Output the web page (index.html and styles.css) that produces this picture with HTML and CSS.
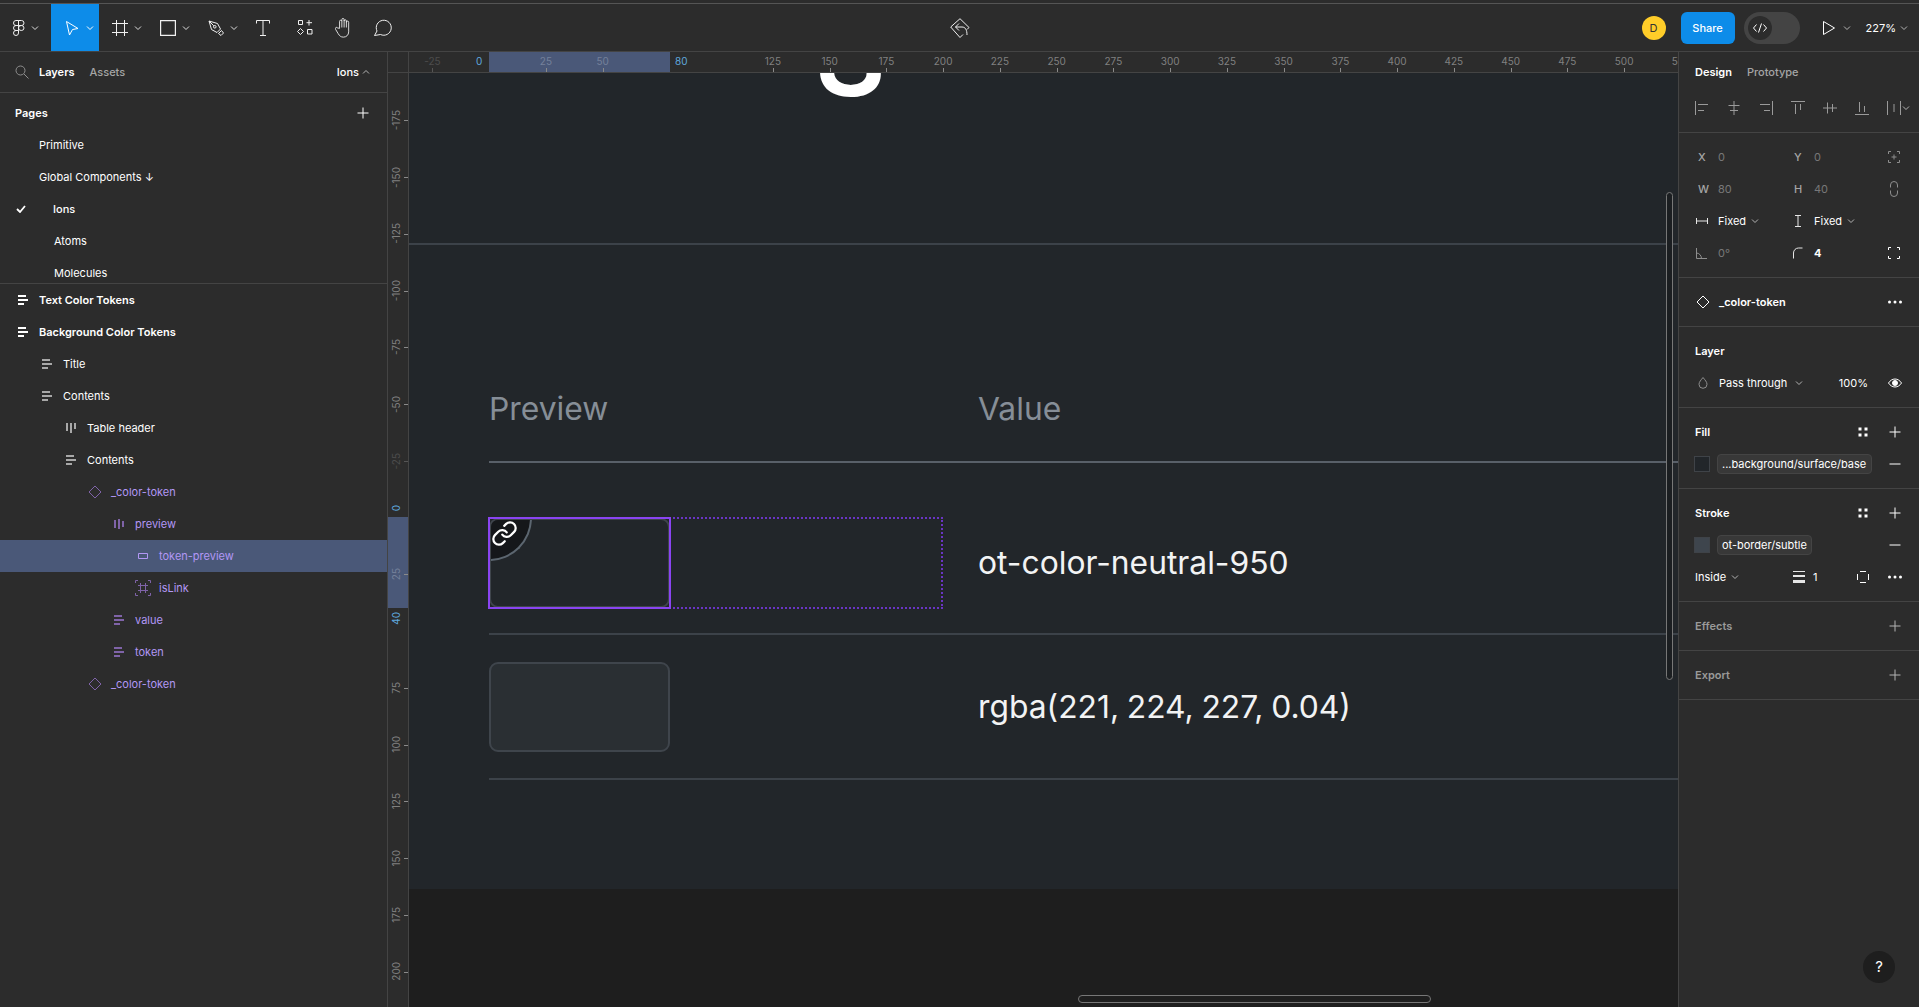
FILE: index.html
```html
<!DOCTYPE html>
<html lang="en">
<head>
  <meta charset="UTF-8">
  <title>Figma - Ions</title>
  <link rel="stylesheet" href="styles.css">
</head>
<body>

<!-- shared icons -->
<svg class="sprite" width="0" height="0">
  <symbol id="chev" viewBox="0 0 8 8"><path d="M1 2.5l3 3 3-3" fill="none" stroke="currentColor"/></symbol>
  <symbol id="plus" viewBox="0 0 16 16"><path d="M8 2.5v11M2.500 8h11" fill="none" stroke="currentColor"/></symbol>
  <symbol id="minus" viewBox="0 0 16 16"><path d="M2.500 8h11" fill="none" stroke="currentColor"/></symbol>
  <symbol id="dots4" viewBox="0 0 16 16"><path d="M3.500 3.500h3v3h-3zM9.500 3.500h3v3h-3zM3.500 9.500h3v3h-3zM9.500 9.500h3v3h-3z" fill="currentColor"/></symbol>
  <symbol id="dots3" viewBox="0 0 16 16"><circle cx="2.500" cy="8" r="1.500" fill="currentColor"/><circle cx="8" cy="8" r="1.500" fill="currentColor"/><circle cx="13.500" cy="8" r="1.500" fill="currentColor"/></symbol>
  <symbol id="stack-h" viewBox="0 0 16 16"><path d="M3 3h8v2H3zM3 7h10v2H3zM3 11h6v2H3z" fill="currentColor"/></symbol>
  <symbol id="stack-v" viewBox="0 0 16 16"><path d="M3 3h2v8H3zM7 3h2v10H7zM11 3h2v6h-2z" fill="currentColor"/></symbol>
  <symbol id="stack-c" viewBox="0 0 16 16"><path d="M3 4h2v8H3zM7 3h2v10H7zM11 5h2v6h-2z" fill="currentColor"/></symbol>
  <symbol id="diamond" viewBox="0 0 16 16"><path d="M8 2l6 6-6 6-6-6z" fill="none" stroke="currentColor"/></symbol>
</svg>

<div class="top-strip"></div>

<header class="toolbar">
  <div class="tools">
    <div class="tool tool-logo">
      <svg width="16" height="16" viewBox="0 0 16 16" fill="none" stroke="currentColor"><path d="M7.500 .5H5a2.500 2.500 0 0 0 0 5h2.500zM7.500 .5h3a2.500 2.500 0 0 1 0 5h-3zM7.500 5.500H5a2.500 2.500 0 0 0 0 5h2.500zM13 8a2.750 2.500 0 1 1-5.500 0 2.750 2.500 0 0 1 5.500 0zM7.500 10.500H5a2.500 2.500 0 1 0 2.500 2.500z"/></svg>
      <svg class="chev"><use href="#chev"/></svg>
    </div>
    <div class="tool tool-active">
      <svg width="16" height="16" viewBox="0 0 16 16" fill="none" stroke="currentColor"><path d="M2.500 1.500L14 8.500l-5.500 1-3 5.500z"/></svg>
      <svg class="chev"><use href="#chev"/></svg>
    </div>
    <div class="tool">
      <svg width="16" height="16" viewBox="0 0 16 16" fill="none" stroke="currentColor"><path d="M4.500 0v16M12.500 0v16M0 3.500h16M0 12.500h16"/></svg>
      <svg class="chev"><use href="#chev"/></svg>
    </div>
    <div class="tool">
      <svg width="16" height="16" viewBox="0 0 16 16" fill="none" stroke="currentColor" stroke-width="1.200"><path d="M.6 .6h14.800v14.800H.6z"/></svg>
      <svg class="chev"><use href="#chev"/></svg>
    </div>
    <div class="tool">
      <svg width="16" height="16" viewBox="0 0 16 16" fill="none" stroke="currentColor"><path d="M1 1l8.500 2.500 3 5.500-3.500 3.500-5.500-3zM1 1l4.800 4.800M10.500 13.500l3-3 2 2.500-2.500 2.500z"/><circle cx="6.800" cy="6.800" r="1.300"/></svg>
      <svg class="chev"><use href="#chev"/></svg>
    </div>
    <div class="tool tool-single">
      <svg width="16" height="16" viewBox="0 0 16 16" fill="none" stroke="currentColor"><path d="M1.500 3.500V.5h13v3M8 .5v15M5 15.500h6"/></svg>
    </div>
    <div class="tool tool-single tool-nudge">
      <svg width="16" height="16" viewBox="0 0 16 16" fill="none" stroke="currentColor"><path d="M1.500 .5h4v4h-4zM12 0v5.500M9.500 2.700h5.500M3.500 8.500l3 3-3 3-3-3zM10.500 9.500H15V14h-4.500z"/></svg>
    </div>
    <div class="tool tool-single">
      <svg width="17" height="21" viewBox="0 0 19 24" fill="none" stroke="currentColor"><path d="M5 13V5a1.300 1.300 0 0 1 2.600 0v-2a1.300 1.300 0 0 1 2.600 0v1.500a1.300 1.300 0 0 1 2.600 0V6a1.300 1.300 0 0 1 2.600 0v11c0 3.500-2.500 6-6 6-3 0-4.500-1.500-6-4l-3-5c-1-1.800 1.200-3 2.400-1.500zM7.600 5v7M10.200 4v8M12.800 5v7"/></svg>
    </div>
    <div class="tool tool-single">
      <svg width="18" height="17" viewBox="0 0 18 17" fill="none" stroke="currentColor"><path d="M.5 16.500L3 12a7.500 7.500 0 1 1 3.500 3.500z"/></svg>
    </div>
  </div>
  <div class="toolbar-center">
    <svg width="20" height="20" viewBox="0 0 20 20" fill="none" stroke="currentColor"><path d="M13 16.500l-3 3L.7 9 10 .7l9 8.800-2 2M9 5.500L5.500 9 9 12.500M5.500 9H12c3.500 0 5 3 5 8"/></svg>
  </div>
  <div class="toolbar-right">
    <div class="avatar">D</div>
    <div class="share-btn">Share</div>
    <div class="code-toggle">
      <span class="code-knob">
        <svg width="14" height="10" viewBox="0 0 14 10" fill="none" stroke="currentColor"><path d="M3.500 1.500L.5 5l3 3.500M10.500 1.500l3 3.500-3 3.500M8.500 .5l-3 9"/></svg>
      </span>
    </div>
    <div class="play">
      <svg width="14" height="16" viewBox="0 0 14 16" fill="none" stroke="currentColor"><path d="M1.500 1.500L12.500 8 1.500 14.500z"/></svg>
      <svg class="chev"><use href="#chev"/></svg>
    </div>
    <div class="zoom-level">227%<svg class="chev"><use href="#chev"/></svg></div>
  </div>
</header>

<div class="workspace">

  <aside class="left-panel">
    <div class="panel-tabs">
      <svg class="search-icon" width="14" height="14" viewBox="0 0 14 14" fill="none" stroke="currentColor"><circle cx="5.500" cy="5.500" r="4.500"/><path d="M9 9l4.500 4.500"/></svg>
      <span class="tab-on">Layers</span>
      <span class="tab-off">Assets</span>
      <span class="page-picker">Ions<svg class="chev chev-up"><use href="#chev"/></svg></span>
    </div>

    <div class="pages">
      <div class="pages-head">
        <span>Pages</span>
        <svg class="icon"><use href="#plus"/></svg>
      </div>
      <div class="page-row">Primitive</div>
      <div class="page-row">Global Components ↓</div>
      <div class="page-row page-current">
        <svg class="check" width="10" height="8" viewBox="0 0 10 8" fill="none" stroke="currentColor" stroke-width="1.800"><path d="M1 4l3 3 5-6"/></svg>
        Ions
      </div>
      <div class="page-row page-sub">Atoms</div>
      <div class="page-row page-sub">Molecules</div>
    </div>

    <div class="layers">
      <div class="layer depth-0 strong"><svg class="icon"><use href="#stack-h"/></svg>Text Color Tokens</div>
      <div class="layer depth-0 strong"><svg class="icon"><use href="#stack-h"/></svg>Background Color Tokens</div>
      <div class="layer depth-1"><svg class="icon dim"><use href="#stack-h"/></svg>Title</div>
      <div class="layer depth-1"><svg class="icon dim"><use href="#stack-h"/></svg>Contents</div>
      <div class="layer depth-2"><svg class="icon dim"><use href="#stack-v"/></svg>Table header</div>
      <div class="layer depth-2"><svg class="icon dim"><use href="#stack-h"/></svg>Contents</div>
      <div class="layer depth-3 purple"><svg class="icon"><use href="#diamond"/></svg>_color-token</div>
      <div class="layer depth-4 purple"><svg class="icon"><use href="#stack-c"/></svg>preview</div>
      <div class="layer depth-5 purple layer-selected">
        <svg class="icon" viewBox="0 0 16 16" fill="none" stroke="currentColor"><path d="M3.500 5.500h9v5h-9z"/></svg>token-preview
      </div>
      <div class="layer depth-5 purple">
        <svg class="icon" viewBox="0 0 16 16" fill="none" stroke="currentColor"><path d="M.5 3V.5H3M13 .5h2.500V3M15.500 13v2.500H13M3 15.500H.5V13M5.500 3v10M10.500 3v10M3 5.500h10M3 10.500h10"/></svg>isLink
      </div>
      <div class="layer depth-4 purple"><svg class="icon"><use href="#stack-h"/></svg>value</div>
      <div class="layer depth-4 purple"><svg class="icon"><use href="#stack-h"/></svg>token</div>
      <div class="layer depth-3 purple"><svg class="icon"><use href="#diamond"/></svg>_color-token</div>
    </div>
  </aside>

  <main class="stage">
    <div class="ruler-corner"></div>

    <div class="ruler-x">
      <div class="ruler-hl"></div>
      <span class="mark mark-zero">0</span>
      <span class="mark mark-end">80</span>
      <span class="cell faint">-25</span>
      <span class="cell blank"></span>
      <span class="cell on-hl">25</span>
      <span class="cell on-hl">50</span>
      <span class="cell blank"></span>
      <span class="cell blank"></span>
      <span class="cell">125</span>
      <span class="cell">150</span>
      <span class="cell">175</span>
      <span class="cell">200</span>
      <span class="cell">225</span>
      <span class="cell">250</span>
      <span class="cell">275</span>
      <span class="cell">300</span>
      <span class="cell">325</span>
      <span class="cell">350</span>
      <span class="cell">375</span>
      <span class="cell">400</span>
      <span class="cell">425</span>
      <span class="cell">450</span>
      <span class="cell">475</span>
      <span class="cell">500</span>
      <span class="cell">525</span>
    </div>

    <div class="ruler-y">
      <div class="ruler-hl"></div>
      <span class="mark mark-zero">0</span>
      <span class="mark mark-end">40</span>
      <span class="cell"><b>-175</b></span>
      <span class="cell"><b>-150</b></span>
      <span class="cell"><b>-125</b></span>
      <span class="cell"><b>-100</b></span>
      <span class="cell"><b>-75</b></span>
      <span class="cell"><b>-50</b></span>
      <span class="cell faint"><b>-25</b></span>
      <span class="cell blank"></span>
      <span class="cell on-hl"><b>25</b></span>
      <span class="cell blank"></span>
      <span class="cell"><b>75</b></span>
      <span class="cell"><b>100</b></span>
      <span class="cell"><b>125</b></span>
      <span class="cell"><b>150</b></span>
      <span class="cell"><b>175</b></span>
      <span class="cell"><b>200</b></span>
    </div>

    <div class="canvas">
      <div class="frame">
        <div class="big-letter">S</div>
        <div class="frame-title"></div>
        <div class="table">
          <div class="table-header">
            <div class="col-preview">Preview</div>
            <div>Value</div>
          </div>
          <div class="token-row token-row-first">
            <div class="preview preview-selected">
              <div class="swatch-box">
                <div class="swatch">
                  <div class="link-corner">
                    <svg width="27" height="27" viewBox="0 0 24 24" fill="none" stroke="#fff" stroke-width="2" stroke-linecap="round" stroke-linejoin="round"><path d="M10 13a5 5 0 0 0 7.540.540l3-3a5 5 0 0 0-7.070-7.070l-1.720 1.710"/><path d="M14 11a5 5 0 0 0-7.540-.540l-3 3a5 5 0 0 0 7.070 7.070l1.710-1.710"/></svg>
                  </div>
                </div>
              </div>
            </div>
            <div class="token-value">ot-color-neutral-950</div>
          </div>
          <div class="token-row">
            <div class="preview">
              <div class="swatch swatch-tint"></div>
            </div>
            <div class="token-value">rgba(221, 224, 227, 0.04)</div>
          </div>
        </div>
      </div>
      <div class="scroll-y"></div>
      <div class="scroll-x"></div>
    </div>
  </main>

  <aside class="right-panel">
    <section class="sec sec-tabs">
      <div class="design-tabs"><span class="tab-on">Design</span><span class="tab-off">Prototype</span></div>
      <div class="align-row">
        <svg class="icon" viewBox="0 0 16 16" fill="none" stroke="currentColor"><path d="M1.500 1v14M4 4.500h10M4 10.500h6"/></svg>
        <svg class="icon" viewBox="0 0 16 16" fill="none" stroke="currentColor"><path d="M8 1v14M2.500 5.500h11M4 10.500h8"/></svg>
        <svg class="icon" viewBox="0 0 16 16" fill="none" stroke="currentColor"><path d="M14.500 1v14M2 4.500h10M6 10.500h6"/></svg>
        <svg class="icon" viewBox="0 0 16 16" fill="none" stroke="currentColor"><path d="M1 1.500h14M5.500 4v10M10.500 4v6"/></svg>
        <svg class="icon" viewBox="0 0 16 16" fill="none" stroke="currentColor"><path d="M1 8h14M5.500 2.500v11M10.500 4v8"/></svg>
        <svg class="icon" viewBox="0 0 16 16" fill="none" stroke="currentColor"><path d="M1 14.500h14M5.500 2v10M10.500 6v6"/></svg>
        <svg class="icon" viewBox="0 0 16 16" fill="none" stroke="currentColor"><path d="M1.500 1v14M14.500 1v14M8 4v8"/></svg>
        <svg class="chev chev-align"><use href="#chev"/></svg>
      </div>
    </section>

    <section class="sec sec-geometry">
      <div class="prop-row">
        <span class="prop-label">X</span><span class="prop-val">0</span>
        <span class="prop-label">Y</span><span class="prop-val">0</span>
        <svg class="icon dim" viewBox="0 0 16 16" fill="none" stroke="currentColor"><path d="M2.500 5V2.500H5M11 2.500h2.500V5M13.500 11v2.500H11M5 13.500H2.500V11M8 5.500v5M5.500 8h5"/></svg>
      </div>
      <div class="prop-row">
        <span class="prop-label">W</span><span class="prop-val">80</span>
        <span class="prop-label">H</span><span class="prop-val">40</span>
        <svg class="icon dim" viewBox="0 0 16 16" fill="none" stroke="currentColor"><path d="M4.500 6.500V4a3.500 3.500 0 0 1 7 0v2.500M4.500 9.500V12a3.500 3.500 0 0 0 7 0V9.500"/></svg>
      </div>
      <div class="prop-row">
        <span class="prop-label"><svg class="icon" viewBox="0 0 16 16" fill="none" stroke="currentColor"><path d="M2.500 5v6M13.500 5v6M2.500 8h11"/></svg></span>
        <span class="prop-val bright">Fixed<svg class="chev"><use href="#chev"/></svg></span>
        <span class="prop-label"><svg class="icon" viewBox="0 0 16 16" fill="none" stroke="currentColor"><path d="M5 2.500h6M5 13.500h6M8 2.500v11"/></svg></span>
        <span class="prop-val bright">Fixed<svg class="chev"><use href="#chev"/></svg></span>
      </div>
      <div class="prop-row">
        <span class="prop-label"><svg class="icon dim" viewBox="0 0 16 16" fill="none" stroke="currentColor"><path d="M2.500 3v10.500H13M2.500 8c2.500 0 5 2.500 5 5.500"/></svg></span>
        <span class="prop-val">0°</span>
        <span class="prop-label"><svg class="icon" viewBox="0 0 16 16" fill="none" stroke="currentColor"><path d="M3.500 13.500V8a5 5 0 0 1 5-5h4"/></svg></span>
        <span class="prop-val bright heavy">4</span>
        <svg class="icon bright" viewBox="0 0 16 16" fill="none" stroke="currentColor"><path d="M2.500 5V2.500H5M11 2.500h2.500V5M13.500 11v2.500H11M5 13.500H2.500V11"/></svg>
      </div>
    </section>

    <section class="sec sec-component">
      <svg class="icon bright"><use href="#diamond"/></svg>
      <span class="component-name">_color-token</span>
      <svg class="icon bright push"><use href="#dots3"/></svg>
    </section>

    <section class="sec sec-layer">
      <div class="sec-title">Layer</div>
      <div class="blend-row">
        <svg class="icon dim" viewBox="0 0 16 16" fill="none" stroke="currentColor"><path d="M8 2.500c2 2.500 4 4.500 4 6.800a4 4 0 0 1-8 0C4 7 6 5 8 2.500z"/></svg>
        <span>Pass through</span>
        <svg class="chev"><use href="#chev"/></svg>
        <span class="opacity">100%</span>
        <svg class="icon bright" viewBox="0 0 16 16" fill="none" stroke="currentColor"><path d="M1.500 8c1.500-2.500 4-4 6.500-4s5 1.500 6.500 4c-1.500 2.500-4 4-6.500 4s-5-1.500-6.500-4z"/><circle cx="8" cy="8" r="2.500" fill="currentColor"/></svg>
      </div>
    </section>

    <section class="sec sec-paint">
      <div class="sec-title">Fill<svg class="icon bright push"><use href="#dots4"/></svg><svg class="icon bright"><use href="#plus"/></svg></div>
      <div class="paint-row">
        <span class="paint-swatch swatch-fill"></span>
        <span class="paint-name paint-wide">...background/surface/base</span>
        <svg class="icon bright push"><use href="#minus"/></svg>
      </div>
    </section>

    <section class="sec sec-paint sec-stroke">
      <div class="sec-title">Stroke<svg class="icon bright push"><use href="#dots4"/></svg><svg class="icon bright"><use href="#plus"/></svg></div>
      <div class="paint-row">
        <span class="paint-swatch swatch-stroke"></span>
        <span class="paint-name">ot-border/subtle</span>
        <svg class="icon bright push"><use href="#minus"/></svg>
      </div>
      <div class="stroke-row">
        <span class="stroke-side">Inside<svg class="chev"><use href="#chev"/></svg></span>
        <svg class="icon" viewBox="0 0 16 16" fill="currentColor"><path d="M2 2h12v1H2zM2 6h12v2H2zM2 11h12v3H2z"/></svg>
        <span class="stroke-num">1</span>
        <svg class="icon bright" viewBox="0 0 16 16" fill="none" stroke="currentColor"><path d="M5 2.500h6M5 13.500h6M2.500 5v6M13.500 5v6"/></svg>
        <svg class="icon bright"><use href="#dots3"/></svg>
      </div>
    </section>

    <section class="sec sec-empty"><span>Effects</span><svg class="icon"><use href="#plus"/></svg></section>
    <section class="sec sec-empty"><span>Export</span><svg class="icon"><use href="#plus"/></svg></section>

    <div class="help">?</div>
  </aside>

</div>

</body>
</html>
```

FILE: styles.css
```css
* {
  box-sizing: border-box;
}
html, body {
  height: 100%;
}
body {
  margin: 0;
  background: #2c2c2c;
  color: #fff;
  font-family: Inter, "Noto Sans", sans-serif;
  font-size: 11px;
  overflow: hidden;
}
.sprite {
  position: absolute;
}
svg {
  display: block;
  flex: none;
}
.icon {
  width: 16px;
  height: 16px;
  color: #e6e6e6;
}
.icon.dim {
  color: #8e8e8e;
}
.icon.bright {
  color: #fff;
}
.chev {
  width: 8px;
  height: 8px;
  color: #b3b3b3;
}
.push {
  margin-left: auto;
}

/* top bar */
.top-strip {
  height: 4px;
  border-bottom: 1px solid #555;
}
.toolbar {
  display: grid;
  grid-template-columns: 1fr auto 1fr;
  align-items: center;
  height: 48px;
  border-bottom: 1px solid #444;
}
.tools {
  display: flex;
  height: 47px;
}
.tool {
  display: flex;
  align-items: center;
  justify-content: center;
  gap: 6px;
  width: 48px;
  padding-left: 8px;
  color: #f0f0f0;
}
.tool .chev {
  color: #ddd;
}
.tool-logo {
  justify-content: flex-start;
  gap: 4px;
  width: 51px;
  padding-left: 11px;
}
.tool-active {
  background: #0d8ce9;
  color: #fff;
}
.tool-active .chev {
  color: #fff;
}
.tool-single {
  width: 40px;
  padding-left: 0;
}
.tool-nudge {
  padding-left: 4px;
}
.toolbar-center {
  color: #f0f0f0;
}
.toolbar-right {
  display: flex;
  align-items: center;
  justify-content: flex-end;
}
.avatar {
  display: flex;
  align-items: center;
  justify-content: center;
  width: 24px;
  height: 24px;
  border-radius: 50%;
  background: #ffcd29;
  color: #333;
  font-size: 11px;
}
.share-btn {
  display: flex;
  align-items: center;
  justify-content: center;
  width: 54px;
  height: 32px;
  margin-left: 15px;
  border-radius: 6px;
  background: #0d8ce9;
  font-weight: 500;
}
.code-toggle {
  width: 56px;
  height: 32px;
  margin-left: 9px;
  padding: 4px;
  border-radius: 16px;
  background: #444;
}
.code-knob {
  display: flex;
  align-items: center;
  justify-content: center;
  width: 24px;
  height: 24px;
  border-radius: 50%;
  background: #2c2c2c;
}
.play {
  display: flex;
  align-items: center;
  gap: 7px;
  margin-left: 22px;
}
.zoom-level {
  display: flex;
  align-items: center;
  gap: 4px;
  margin-left: 15px;
  margin-right: 11px;
}

/* layout */
.workspace {
  display: flex;
  height: calc(100vh - 52px);
}
.left-panel {
  flex: none;
  width: 388px;
  border-right: 1px solid #444;
}
.stage {
  position: relative;
  flex: 1;
  display: grid;
  grid-template-columns: 21px 1fr;
  grid-template-rows: 21px 1fr;
  min-width: 0;
}
.right-panel {
  position: relative;
  flex: none;
  width: 241px;
  border-left: 1px solid #444;
}

/* left panel */
.panel-tabs {
  display: flex;
  align-items: center;
  height: 41px;
  padding-left: 15px;
  border-bottom: 1px solid #444;
}
.search-icon {
  margin-right: 10px;
  color: #8e8e8e;
}
.tab-on {
  font-weight: 600;
}
.tab-off {
  color: #a5a5a5;
  font-weight: 500;
}
.panel-tabs .tab-off {
  margin-left: 15px;
}
.page-picker {
  display: flex;
  align-items: center;
  gap: 3px;
  margin-left: auto;
  margin-right: 17px;
  font-weight: 500;
}
.chev-up {
  transform: rotate(180deg);
}
.pages {
  height: 191px;
  border-bottom: 1px solid #444;
  overflow: hidden;
}
.pages-head {
  display: flex;
  align-items: center;
  justify-content: space-between;
  height: 32px;
  margin-top: 4px;
  padding: 0 16px 0 15px;
  font-weight: 600;
}
.pages-head .icon {
  color: #fff;
}
.page-row {
  position: relative;
  display: flex;
  align-items: center;
  height: 32px;
  padding-left: 39px;
}
.page-current {
  padding-left: 53px;
  font-weight: 500;
}
.page-sub {
  padding-left: 54px;
}
.check {
  position: absolute;
  left: 16px;
  top: 12px;
}
.layer {
  display: flex;
  align-items: center;
  gap: 8px;
  height: 32px;
}
.layer .icon {
  color: #a8a8a8;
}
.strong {
  font-weight: 600;
}
.strong .icon {
  color: #fff;
}
.depth-0 { padding-left: 15px; }
.depth-1 { padding-left: 39px; }
.depth-2 { padding-left: 63px; }
.depth-3 { padding-left: 87px; }
.depth-4 { padding-left: 111px; }
.depth-5 { padding-left: 135px; }
.purple {
  color: #b297f5;
}
.layer.purple .icon {
  color: #7f63a8;
}
.layer-selected {
  background: #4a5878;
}
.layer-selected.purple .icon {
  color: #b297f5;
}

/* rulers */
.ruler-corner {
  border-right: 1px solid #444;
  border-bottom: 1px solid #444;
}
.ruler-x, .ruler-y {
  position: relative;
  display: flex;
  overflow: hidden;
  color: #808080;
  font-size: 10px;
}
.ruler-x {
  border-bottom: 1px solid #444;
}
.ruler-x .cell {
  position: relative;
  flex: none;
  width: 56.75px;
  padding-top: 2px;
  line-height: 15px;
  text-align: center;
}
.ruler-x .faint {
  margin-left: -5px;
}
.ruler-x .cell::after {
  content: "";
  position: absolute;
  left: 50%;
  bottom: 0;
  width: 1px;
  height: 4px;
  background: #8a8a8a;
}
.ruler-y {
  flex-direction: column;
  padding-top: 19px;
  border-right: 1px solid #444;
}
.ruler-y .cell {
  position: relative;
  display: flex;
  align-items: center;
  flex: none;
  height: 56.75px;
}
.ruler-y .cell b {
  width: 15px;
  margin-left: 1px;
  font-weight: 400;
  line-height: 15px;
  text-align: center;
  writing-mode: vertical-rl;
  transform: rotate(180deg);
}
.ruler-y .cell::after {
  content: "";
  position: absolute;
  right: 0;
  top: 50%;
  width: 4px;
  height: 1px;
  background: #8a8a8a;
}
.ruler-x .cell.blank::after,
.ruler-y .cell.blank::after {
  display: none;
}
.cell.faint {
  color: #4c4c4c;
}
.cell.faint::after {
  background: #555 !important;
}
.cell.on-hl {
  color: #74809a;
}
.ruler-hl {
  position: absolute;
  background: #4a5878;
}
.ruler-x .ruler-hl {
  left: 80px;
  top: 0;
  width: 181px;
  height: 20px;
}
.ruler-y .ruler-hl {
  left: 0;
  top: 444px;
  width: 20px;
  height: 91px;
}
.mark {
  position: absolute;
  color: #5fa8de;
}
.ruler-x .mark {
  top: 2px;
  line-height: 15px;
}
.ruler-x .mark-zero {
  left: 67px;
}
.ruler-x .mark-end {
  left: 266px;
}
.ruler-y .mark {
  left: 1px;
  width: 15px;
  line-height: 15px;
  text-align: center;
  writing-mode: vertical-rl;
  transform: rotate(180deg);
}
.ruler-y .mark-zero {
  top: 432px;
}
.ruler-y .mark-end {
  top: 539px;
}

/* canvas */
.canvas {
  position: relative;
  overflow: hidden;
  background: #1e1e1e;
}
.frame {
  position: relative;
  height: 816px;
  background: #22262a;
  overflow: hidden;
}
.big-letter {
  position: absolute;
  left: 406px;
  top: -71px;
  font-size: 109px;
  font-weight: 600;
  line-height: 1;
}
.frame-title {
  height: 172px;
  border-bottom: 2px solid #3c4249;
}
.table {
  margin-left: 80px;
}
.table-header {
  display: flex;
  align-items: flex-end;
  height: 218px;
  padding-bottom: 33px;
  border-bottom: 2px solid #596069;
  color: #868e97;
  font-size: 31.8px;
  line-height: 38px;
}
.col-preview {
  width: 489px;
}
.token-row {
  display: flex;
  align-items: center;
  padding: 27px 0 26px;
  border-bottom: 2px solid #3c4249;
}
.token-row-first {
  margin-top: 28px;
  padding-bottom: 25px;
}
.preview {
  flex: none;
  width: 453px;
  height: 90px;
  margin-right: 36px;
}
.preview-selected {
  outline: 2px dotted #6a35c4;
  outline-offset: -1px;
}
.swatch-box {
  position: relative;
  width: 181px;
  height: 90px;
}
.swatch-box::after {
  content: "";
  position: absolute;
  inset: -1px;
  border: 2px solid #8a44f2;
}
.swatch {
  position: relative;
  width: 181px;
  height: 90px;
  border: 2px solid #3f454c;
  border-radius: 9px;
  overflow: hidden;
}
.swatch-tint {
  background: #2a2f33;
}
.link-corner {
  position: absolute;
  left: -2px;
  top: -2px;
  display: flex;
  align-items: center;
  justify-content: center;
  width: 43px;
  height: 43px;
  padding: 0 10px 10px 0;
  border-right: 2px solid #5c6670;
  border-bottom: 2px solid #5c6670;
  border-bottom-right-radius: 43px;
  background: #15171a;
}
.token-value {
  font-size: 31.8px;
  line-height: 40px;
  word-spacing: -1.2px;
  color: #f2f3f4;
}
.scroll-y {
  position: absolute;
  right: 5px;
  top: 119px;
  width: 7px;
  height: 488px;
  border: 1px solid #777;
  border-radius: 4px;
  background: #1b1e21;
}
.scroll-x {
  position: absolute;
  left: 669px;
  bottom: 4px;
  width: 353px;
  height: 8px;
  border: 1px solid #777;
  border-radius: 4px;
}

/* right panel */
.sec {
  border-bottom: 1px solid #444;
}
.sec-tabs {
  height: 81px;
}
.design-tabs {
  display: flex;
  gap: 15px;
  align-items: center;
  height: 40px;
  padding-left: 16px;
}
.align-row {
  display: flex;
  align-items: center;
  gap: 16px;
  height: 32px;
  padding-left: 15px;
}
.align-row .icon {
  color: #9a9a9a;
}
.align-row .chev-align {
  margin-left: -16px;
}
.sec-geometry {
  height: 145px;
  padding-top: 8px;
}
.prop-row {
  display: grid;
  grid-template-columns: 24px 72px 24px 72px 16px;
  align-items: center;
  height: 32px;
  padding-left: 15px;
}
.prop-label {
  padding-left: 4px;
  color: #a5a5a5;
  font-weight: 500;
}
.prop-label .icon {
  margin-left: -4px;
}
.prop-val {
  display: flex;
  align-items: center;
  gap: 5px;
  color: #787878;
}
.prop-val.bright {
  color: #fff;
}
.prop-val.heavy {
  font-weight: 700;
}
.sec-component {
  display: flex;
  align-items: center;
  gap: 8px;
  height: 49px;
  padding: 0 16px;
}
.component-name {
  font-weight: 600;
}
.sec-layer {
  height: 81px;
  padding-top: 8px;
}
.sec-title {
  display: flex;
  align-items: center;
  gap: 16px;
  height: 32px;
  padding: 0 16px;
  font-weight: 600;
}
.blend-row {
  display: flex;
  align-items: center;
  gap: 8px;
  height: 32px;
  padding: 0 16px;
}
.opacity {
  margin-left: auto;
  margin-right: 11px;
}
.sec-paint {
  height: 81px;
  padding-top: 8px;
}
.sec-stroke {
  height: 113px;
}
.paint-row {
  display: flex;
  align-items: center;
  gap: 7px;
  height: 32px;
  padding: 0 16px 0 15px;
}
.paint-swatch {
  width: 16px;
  height: 16px;
  border: 1px solid #3f4348;
}
.swatch-fill {
  background: #22262a;
}
.swatch-stroke {
  background: #3e454d;
}
.paint-name {
  height: 20px;
  padding: 0 4px;
  border: 1px solid #444;
  border-radius: 4px;
  background: #383838;
  line-height: 18px;
  white-space: nowrap;
}
.paint-wide {
  width: 155px;
}
.stroke-row {
  display: grid;
  grid-template-columns: 96px 22px 42px 32px 16px;
  align-items: center;
  height: 32px;
  padding-left: 16px;
}
.stroke-side {
  display: flex;
  align-items: center;
  gap: 5px;
}
.sec-empty {
  display: flex;
  align-items: center;
  justify-content: space-between;
  height: 49px;
  padding: 0 16px;
  color: #9a9a9a;
  font-weight: 600;
}
.sec-empty .icon {
  color: #b3b3b3;
}
.help {
  position: absolute;
  right: 24px;
  bottom: 24px;
  width: 32px;
  height: 32px;
  border-radius: 50%;
  background: #1e1e1e;
  font-size: 15px;
  line-height: 32px;
  text-align: center;
}
```
